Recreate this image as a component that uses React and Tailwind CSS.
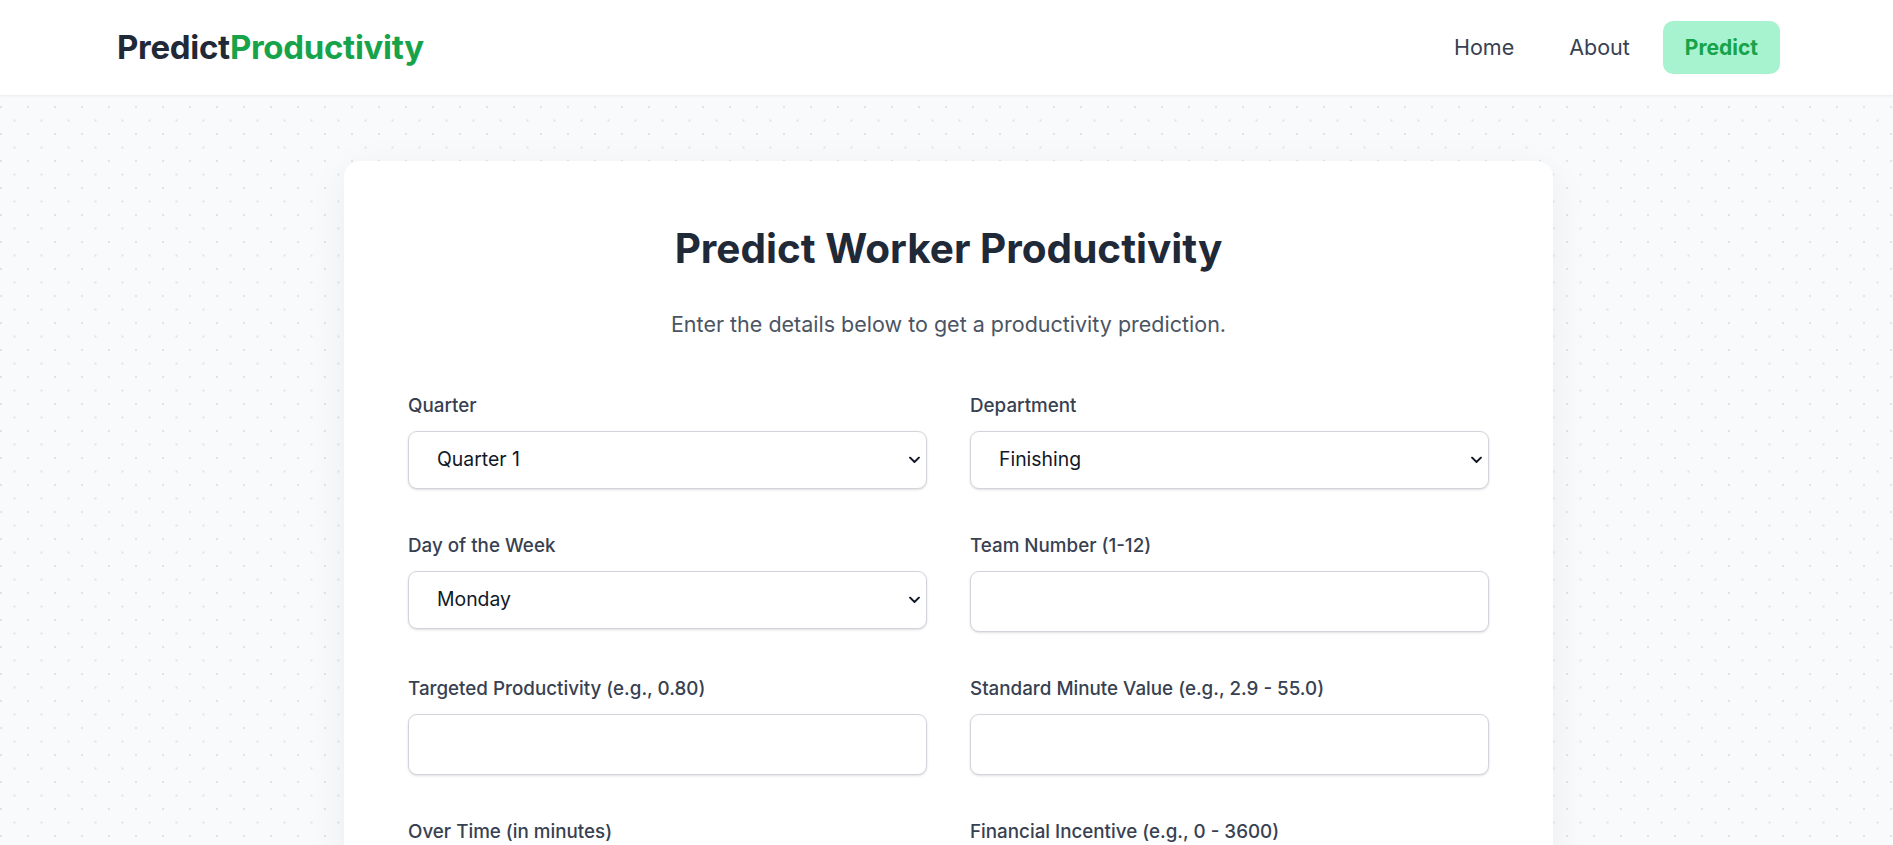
import React, { useState } from 'react';

const fieldsTop = [
  { type: 'select', label: 'Quarter', options: ['Quarter 1', 'Quarter 2', 'Quarter 3', 'Quarter 4', 'Quarter 5'] },
  { type: 'select', label: 'Department', options: ['Finishing', 'Sewing'] },
  { type: 'select', label: 'Day of the Week', options: ['Monday', 'Tuesday', 'Wednesday', 'Thursday', 'Saturday', 'Sunday'] },
  { type: 'input', label: 'Team Number (1-12)' },
  { type: 'input', label: 'Targeted Productivity (e.g., 0.80)' },
  { type: 'input', label: 'Standard Minute Value (e.g., 2.9 - 55.0)' },
  { type: 'input', label: 'Over Time (in minutes)' },
  { type: 'input', label: 'Financial Incentive (e.g., 0 - 3600)' },
  { type: 'input', label: 'Idle Time (in minutes)' },
  { type: 'input', label: 'Idle Men' },
  { type: 'input', label: 'Number of Style Changes' },
  { type: 'input', label: 'Number of Workers' },
];

function Chevron() {
  return (
    <svg className="pointer-events-none absolute right-[7px] top-1/2 -translate-y-1/2" width="11" height="7" viewBox="0 0 11 7" fill="none" stroke="#111827" strokeWidth="1.8" strokeLinecap="round" strokeLinejoin="round">
      <path d="M1 1l4.5 4.5L10 1" />
    </svg>
  );
}

function Field({ field, value, onChange }) {
  return (
    <div>
      <label className="block mb-[12px] text-[18.8px] leading-[26px] font-medium text-[#374151]">{field.label}</label>
      {field.type === 'select' ? (
        <div className="relative">
          <select
            value={value}
            onChange={onChange}
            className="w-full h-[58px] appearance-none pl-[28px] pr-10 bg-white border border-[#d1d5db] rounded-[9px] shadow-sm text-[19.4px] text-[#111827] focus:outline-none"
          >
            {field.options.map(o => <option key={o}>{o}</option>)}
          </select>
          <Chevron />
        </div>
      ) : (
        <input
          type="number"
          value={value}
          onChange={onChange}
          className="w-full h-[61px] px-[28px] bg-white border border-[#d1d5db] rounded-[9px] shadow-sm text-[19.4px] text-[#111827] focus:outline-none"
        />
      )}
    </div>
  );
}

export default function App() {
  const [values, setValues] = useState({});

  const update = (label) => (e) => setValues({ ...values, [label]: e.target.value });

  return (
    <div className="min-h-screen flex flex-col font-['Inter','Liberation_Sans',sans-serif] bg-[#f8fafc]">
      {/* Header */}
      <header className="h-[96px] bg-white border-b border-[#eef0f3] shadow-[0_1px_2px_rgba(0,0,0,0.03)] flex items-center px-[117px] justify-between">
        <div className="text-[33px] font-bold leading-none tracking-[-0.3px]">
          <span className="text-[#1f2937]">Predict</span>
          <span className="text-[#16a34a]">Productivity</span>
        </div>
        <nav className="flex items-center gap-[11px] mr-[-4px]">
          <a href="#" className="px-[22px] py-[12px] rounded-[10px] text-[21.5px] leading-[29px] text-[#374151]">Home</a>
          <a href="#" className="px-[22px] py-[12px] rounded-[10px] text-[21.5px] leading-[29px] text-[#374151]">About</a>
          <a href="#" className="px-[22px] py-[12px] rounded-[10px] text-[21px] leading-[29px] font-bold text-[#16a34a] bg-[#a7f3d0]">Predict</a>
        </nav>
      </header>

      {/* Main */}
      <main className="flex-1 pt-[65px] pb-16 pl-[4px] bg-[radial-gradient(circle_at_1px_1px,#e1e5ea_1px,transparent_1.5px),radial-gradient(circle_at_1px_1px,#e1e5ea_1px,transparent_1.5px)] bg-[size:27px_27px] bg-[position:0_10px,13.5px_23.5px]">
        <div className="mx-auto w-[1209px] bg-white rounded-2xl shadow-[0_10px_40px_rgba(15,23,42,0.06)] px-16 pt-16 pb-16">
          <h1 className="text-center text-[40.5px] leading-[48px] font-bold text-[#1f2937]">Predict Worker Productivity</h1>
          <p className="mt-[36px] text-center text-[21.5px] leading-[30px] text-[#4b5563]">Enter the details below to get a productivity prediction.</p>

          <form className="mt-[54px]" onSubmit={(e) => e.preventDefault()}>
            <div className="grid grid-cols-2 gap-x-[43px] gap-y-[44px]">
              {fieldsTop.map(f => (
                <Field key={f.label} field={f} value={values[f.label] ?? (f.options ? f.options[0] : '')} onChange={update(f.label)} />
              ))}
            </div>
            <button type="submit" className="mt-12 w-full h-[60px] rounded-[10px] bg-[#16a34a] text-white text-[20px] font-semibold">
              Predict Productivity
            </button>
          </form>
        </div>
      </main>
    </div>
  );
}
